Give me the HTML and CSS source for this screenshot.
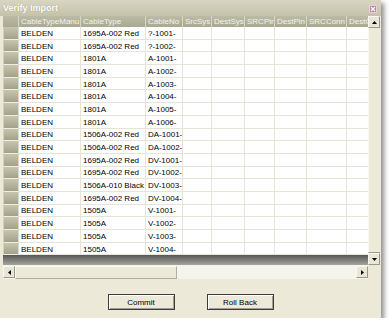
FILE: index.html
```html
<!DOCTYPE html>
<html lang="en">
<head>
  <meta charset="UTF-8" />
  <title>Verify Import</title>
  <link rel="stylesheet" href="styles.css">
</head>
<body>

  <div class="window">
    <div class="titlebar">
      <span class="title">Verify Import</span>
      <span class="close">
        <svg width="8" height="8" viewBox="0 0 8 8">
          <rect x="0" y="0" width="8" height="8" fill="#c27aae" />
          <rect x="0.5" y="0.5" width="7" height="7" fill="none" stroke="#e8d0e0" />
          <path d="M2 2 L6 6 M6 2 L2 6" stroke="#fff" stroke-width="1.3" />
        </svg>
      </span>
    </div>

    <div class="grid-frame">
      <div class="grid-main">
        <div class="grid-view">
          <table class="grid">
            <colgroup>
              <col class="c-head"><col class="c-manu"><col class="c-type"><col class="c-no">
              <col class="c-src"><col class="c-dest"><col class="c-srcpin"><col class="c-destpin">
              <col class="c-srcconn"><col class="c-destconn">
            </colgroup>
            <thead>
              <tr>
                <th class="corner-cell"></th>
                <th>CableTypeManu</th>
                <th>CableType</th>
                <th>CableNo</th>
                <th>SrcSys</th>
                <th>DestSys</th>
                <th>SRCPin</th>
                <th>DestPin</th>
                <th>SRCConn</th>
                <th>DestConn</th>
              </tr>
            </thead>
            <tbody id="rows"></tbody>
          </table>
          <div class="grid-empty"></div>
        </div>

        <div class="vscroll">
          <div class="scroll-btn">
            <svg width="5" height="3" viewBox="0 0 5 3"><path d="M0 3 L2.5 0 L5 3 Z" fill="#000" /></svg>
          </div>
          <div class="vtrack"></div>
          <div class="scroll-btn">
            <svg width="5" height="3" viewBox="0 0 5 3"><path d="M0 0 L5 0 L2.5 3 Z" fill="#000" /></svg>
          </div>
        </div>
      </div>

      <div class="hscroll-row">
        <div class="hscroll">
          <div class="scroll-btn">
            <svg width="3" height="5" viewBox="0 0 3 5"><path d="M3 0 L3 5 L0 2.5 Z" fill="#000" /></svg>
          </div>
          <div class="hthumb"></div>
          <div class="htrack"></div>
          <div class="scroll-btn">
            <svg width="3" height="5" viewBox="0 0 3 5"><path d="M0 0 L3 2.5 L0 5 Z" fill="#000" /></svg>
          </div>
        </div>
        <div class="scroll-corner"></div>
      </div>
    </div>

    <div class="actions">
      <button class="btn">Commit</button>
      <button class="btn">Roll Back</button>
    </div>
  </div>

  <script>
    const data = [
      ['1695A-002 Red', '?-1001-'],
      ['1695A-002 Red', '?-1002-'],
      ['1801A', 'A-1001-'],
      ['1801A', 'A-1002-'],
      ['1801A', 'A-1003-'],
      ['1801A', 'A-1004-'],
      ['1801A', 'A-1005-'],
      ['1801A', 'A-1006-'],
      ['1506A-002 Red', 'DA-1001-'],
      ['1506A-002 Red', 'DA-1002-'],
      ['1695A-002 Red', 'DV-1001-'],
      ['1695A-002 Red', 'DV-1002-'],
      ['1506A-010 Black', 'DV-1003-'],
      ['1695A-002 Red', 'DV-1004-'],
      ['1505A', 'V-1001-'],
      ['1505A', 'V-1002-'],
      ['1505A', 'V-1003-'],
      ['1505A', 'V-1004-']
    ];

    const tbody = document.getElementById('rows');

    data.forEach(function(item) {
      const tr = document.createElement('tr');

      const head = document.createElement('td');
      head.className = 'row-head';
      tr.appendChild(head);

      const cells = ['BELDEN', item[0], item[1], '', '', '', '', '', ''];
      cells.forEach(function(text) {
        const td = document.createElement('td');
        td.textContent = text;
        tr.appendChild(td);
      });

      tbody.appendChild(tr);
    });
  </script>

</body>
</html>
```

FILE: styles.css
```css
body {
  margin: 0;
  background: #fff;
  font-family: "Liberation Sans", Arial, sans-serif;
}
.window {
  width: 381px;
  height: 318px;
  background: #ece9d8;
  box-shadow: 3px 3px 5px rgba(0, 0, 0, 0.45);
  display: flex;
  flex-direction: column;
}
.titlebar {
  height: 16px;
  background: linear-gradient(#d8d6c2, #c4c2a8);
  display: flex;
  align-items: center;
  justify-content: space-between;
  padding: 0 4px 0 3px;
}
.title {
  color: #fff;
  font-weight: bold;
  font-size: 9px;
  text-shadow: 0 0 1px #8e8c74;
}
.close {
  display: flex;
  margin-top: 1px;
}

/* grid */
.grid-frame {
  margin: 0 1px 0 3px;
}
.grid-main {
  display: flex;
  height: 249px;
}
.grid-view {
  width: 365px;
  overflow: hidden;
  display: flex;
  flex-direction: column;
  background: #fff;
}
.grid {
  table-layout: fixed;
  width: 384px;
  border-spacing: 0;
  font-size: 8px;
  flex: none;
}
.c-head { width: 16px; }
.c-manu { width: 62px; }
.c-type { width: 65px; }
.c-no { width: 37px; }
.c-src { width: 29px; }
.c-dest { width: 33px; }
.c-srcpin { width: 30px; }
.c-destpin { width: 32px; }
.c-srcconn { width: 40px; }
.c-destconn { width: 40px; }
.grid th {
  height: 11px;
  padding: 0 0 0 2px;
  box-sizing: border-box;
  background: linear-gradient(#bcbca6, #a9a991);
  color: #f4f4ee;
  font-weight: normal;
  text-align: left;
  white-space: nowrap;
  overflow: hidden;
  border-right: 1px solid #d6d6c6;
}
.grid td {
  height: 12.7px;
  padding: 1px 0 0 2px;
  box-sizing: border-box;
  color: #000;
  white-space: nowrap;
  overflow: hidden;
  border-right: 1px solid #e6e4d6;
  border-bottom: 1px solid #e6e4d6;
}
.grid .row-head {
  padding: 0;
  background: linear-gradient(#c6c6ae, #a2a28a);
  border-right: 1px solid #d8d8c8;
  border-bottom: 1px solid #eeeee4;
  border-left: 1px solid #d0d0bc;
}
.grid-empty {
  flex: 1;
  background: linear-gradient(#565656, #a6a69e);
}

/* scrollbars */
.scroll-btn {
  width: 12px;
  height: 12px;
  box-sizing: border-box;
  background: #e8e6d6;
  border: 1px solid;
  border-color: #f8f8f2 #9a9888 #9a9888 #f8f8f2;
  display: flex;
  align-items: center;
  justify-content: center;
  flex: none;
}
.vscroll {
  width: 12px;
  display: flex;
  flex-direction: column;
  background: #ecead8;
}
.vtrack {
  flex: 1;
  border-left: 1px solid #f8f8f0;
  border-bottom: 1px solid #9a9888;
}
.hscroll-row {
  display: flex;
  height: 14px;
}
.hscroll {
  width: 365px;
  display: flex;
  align-items: center;
  background: #f4f3ec;
}
.hthumb {
  width: 162px;
  height: 13px;
  box-sizing: border-box;
  background: #ece9d8;
  border: 1px solid;
  border-color: #fafaf4 #b0ae9e #b0ae9e #fafaf4;
}
.htrack {
  flex: 1;
}
.scroll-corner {
  width: 12px;
  background: #ece9d8;
}

/* buttons */
.actions {
  display: flex;
  justify-content: center;
  gap: 32px;
  margin-top: 15px;
}
.btn {
  width: 67px;
  height: 16px;
  padding: 0;
  font-family: "Liberation Sans", Arial, sans-serif;
  font-size: 8px;
  color: #000;
  background: #ece9d8;
  border: 1px solid #3c3c3c;
  box-shadow: inset 1px 1px #fff, inset -1px -1px #a09e90;
}
```
